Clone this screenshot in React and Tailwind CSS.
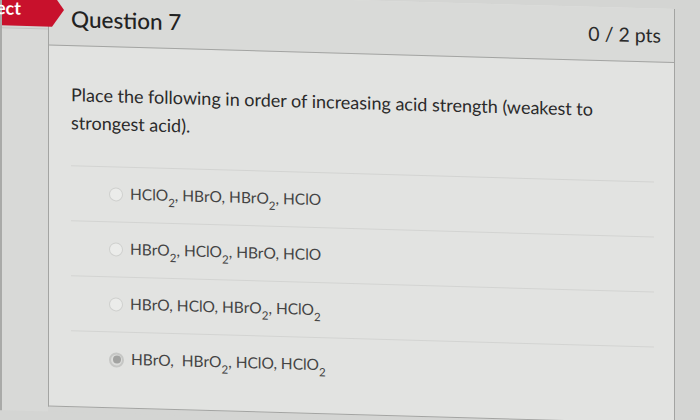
import React from "react";

const F = { fontFamily: "Lato, 'Open Sans', sans-serif" };

function Sub({ children }) {
  return <sub className="text-[11.5px] leading-none align-[-3px]">{children}</sub>;
}

function Radio({ selected }) {
  return selected ? (
    <span className="flex h-[15px] w-[15px] shrink-0 items-center justify-center rounded-full border-2 border-[#c6c7c5] bg-[#dcdddb]">
      <span className="h-[8px] w-[8px] rounded-full bg-[#a2a3a1]" />
    </span>
  ) : (
    <span className="flex h-[14px] w-[14px] shrink-0 rounded-full border border-[#cfd0ce] bg-[#ebecea]" />
  );
}

const options = [
  { sel: false, content: (<>HClO<Sub>2</Sub>, HBrO, HBrO<Sub>2</Sub>, HClO</>) },
  { sel: false, content: (<>HBrO<Sub>2</Sub>, HClO<Sub>2</Sub>, HBrO, HClO</>) },
  { sel: false, content: (<>HBrO, HClO, HBrO<Sub>2</Sub>, HClO<Sub>2</Sub></>) },
  { sel: true, content: (<>HBrO,&nbsp; HBrO<Sub>2</Sub>, HClO, HClO<Sub>2</Sub></>) },
];

export default function App() {
  return (
    <div className="h-[420px] w-[700px] overflow-hidden bg-[#d4d5d3]" style={F}>
      <div className="flex h-[420px] w-[700px] skew-y-[1.6deg] bg-[#d4d5d3]">
        {/* left strip */}
        <div className="relative z-10 flex w-[48px] shrink-0 flex-col border-l-2 border-[#a9aaa8]">
          <div className="flex h-[35px] w-[62px] items-center">
            <div className="flex h-[35px] w-[50px] items-center bg-[#c8112c] pl-[2px]">
              <span className="-ml-[8px] text-[18px] font-bold text-white">ect</span>
            </div>
            <div className="h-0 w-0 border-y-[17.5px] border-l-[12px] border-y-transparent border-l-[#c8112c]" />
          </div>
          <div className="mt-[2px] flex-1 border-t border-[#c2c3c1] bg-[#d8d9d7]" />
        </div>
        {/* card */}
        <div className="flex h-[415px] w-[627px] flex-col border-x border-b border-[#a3a4a2] bg-[#e2e3e1]">
          <div className="flex h-[54px] shrink-0 items-center justify-between border-b border-[#a3a4a2] bg-[#d9dad8] pl-[22px] pr-[13px]">
            <span className="text-[22.5px] font-medium text-[#222]">Question 7</span>
            <span className="text-[19.5px] text-[#2a2a2a]">0 / 2 pts</span>
          </div>
          <div className="flex flex-col pl-[22px] pr-[20px]">
            <p className="pt-[34px] text-[18px] leading-[28px] text-[#2a2a2a]">
              Place the following in order of increasing acid strength (weakest to
              <br />
              strongest acid).
            </p>
            <div className="mt-[29px] flex flex-col">
              {options.map((o, i) => (
                <div
                  key={i}
                  className="flex h-[55px] items-center gap-[7px] border-t border-[#d3d4d2] pl-[38px]"
                >
                  <Radio selected={o.sel} />
                  <span className="text-[15.5px] text-[#444]">{o.content}</span>
                </div>
              ))}
            </div>
          </div>
        </div>
      </div>
    </div>
  );
}
